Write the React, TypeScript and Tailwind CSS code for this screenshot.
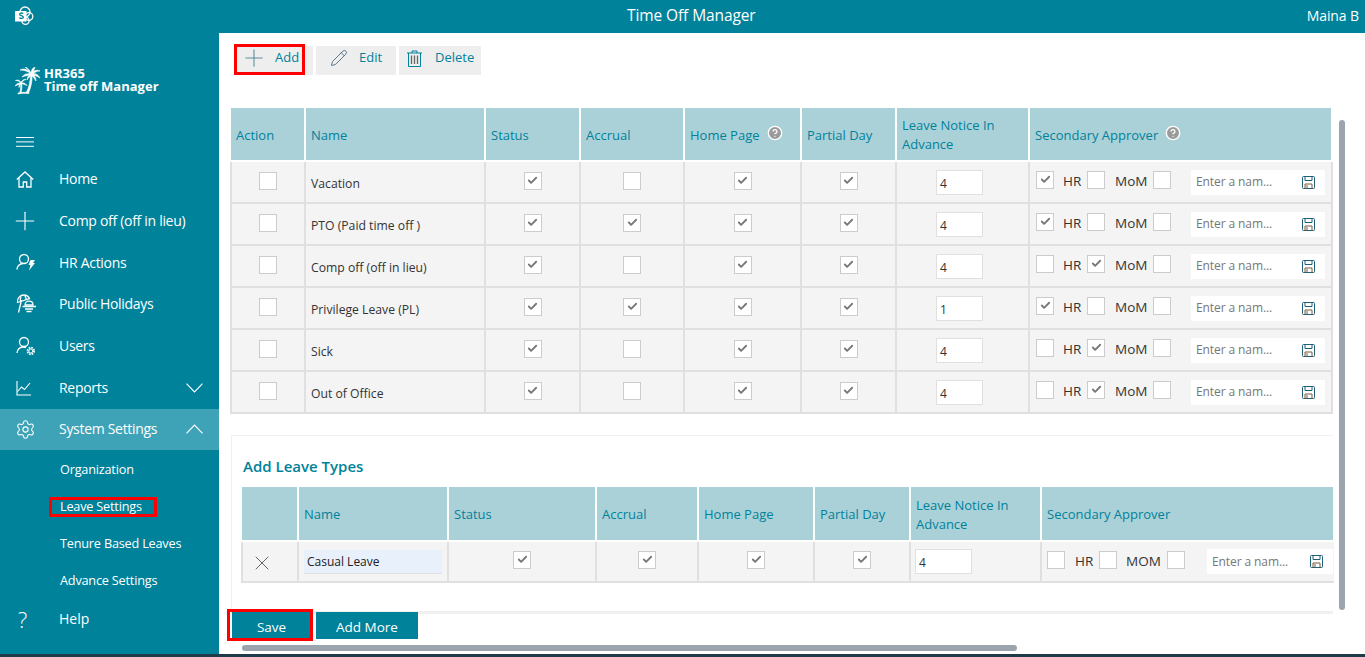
import { Check, CircleHelp, Pencil, Plus, Settings, X } from 'lucide-react'
import type { ReactNode } from 'react'

function SharePointLogo() {
  return (
    <svg width="20" height="20" viewBox="0 0 20 20" fill="none" stroke="white" strokeWidth="1.300">
      <circle cx="11" cy="6" r="5" />
      <circle cx="15" cy="10.500" r="3.800" />
      <circle cx="11.500" cy="14.800" r="3.600" />
      <rect x="1" y="5" width="11.500" height="10.500" rx=".5" fill="white" stroke="none" />
      <path d="M9.300 7.500c-1.500-.8-3.800-.5-3.600 1 .2 1.300 3.700 1 3.600 2.800-.1 1.300-2.600 1.300-4 .6" stroke="#00829b" strokeWidth="1.400" />
    </svg>
  )
}

function PalmLogo() {
  return (
    <svg width="26" height="28" viewBox="0 0 26 28" fill="white" stroke="white" strokeWidth="0.600" strokeLinejoin="round">
      <path d="M16 7C13 2 9 1 5 3c4 0 8 1 11 4z" />
      <path d="M16 7c-1-4-3-6-6-7 3 2 4 4 5 7z" />
      <path d="M16 7c0-3 1-6 4-7-1 3-2 5-3 7z" />
      <path d="M16 7c2-3 5-5 9-3-4 0-6 2-8 4z" />
      <path d="M16 7c4-1 7 0 9 4-3-2-6-3-9-3z" />
      <path d="M16 7c3 1 5 3 5 7-2-3-3-5-6-6z" />
      <path d="M16 7c-3-1-7 0-9 3 3-1 6-2 9-2z" />
      <path d="M16 7c-2 1-4 3-4 6 1-2 3-4 5-5z" />
      <path d="M15.500 7.500h1.500c.5 6-1 13-3.500 18.500H11c3-5 4.500-12 4.500-18.500z" />
      <path d="M6 15.500c-1.500-2.500-3.500-3-5.500-2 2 0 4 .8 5.500 2.500z" />
      <path d="M6 15.500c1-2.500 3-3.500 5-3-2 .5-3.500 1.500-4.500 3.500z" />
      <path d="M6 16c2-.5 4 0 6 2.500-2-1-4-1.500-6-2z" />
      <path d="M6 16c-2-.5-4.500.5-6 3 2-1 4-1.800 6-2.500z" />
      <path d="M5.800 16c-1.500.8-2 2.500-1.800 4.500.6-1.800 1.200-3 2.200-4z" />
      <path d="M5.700 16.500h1c.4 3 .1 6-.7 9.500H4.800c.8-3.500 1.100-6.500.9-9.500z" />
      <path d="M3 26c3-.8 7-.8 11-.5v1c-4-.3-8-.2-11 .5z" />
    </svg>
  )
}

function HomeIcon() {
  return (
    <svg width="18" height="17" viewBox="0 0 18 17" fill="none" stroke="white" strokeWidth="1.300">
      <path d="M.8 8.500 9 1l8.200 7.500" />
      <path d="M3 7v9h4.300v-5h3.400v5H15V7" />
    </svg>
  )
}

function HamburgerIcon() {
  return (
    <svg width="18" height="10" viewBox="0 0 18 10" stroke="white" strokeWidth="1">
      <path d="M0 .5h18M0 4.900h18M0 9.300h18" />
    </svg>
  )
}

function Chevron({ up }: { up?: boolean }) {
  return (
    <svg width="17" height="10" viewBox="0 0 17 10" fill="none" stroke="white" strokeWidth="1.100" className="shrink-0">
      <path d={up ? 'M.5 9.300 8.500 1l8 8.300' : 'M.5.700 8.500 9l8-8.300'} />
    </svg>
  )
}

function UserBolt() {
  return (
    <svg width="20" height="20" viewBox="0 0 20 20" fill="none" stroke="white" strokeWidth="1.300">
      <circle cx="8" cy="6" r="4.500" />
      <path d="M1 16.500c0-3.500 2.800-6 6-6" />
      <path d="M14.500 7H19l-2 3h2l-6 7.500 1.500-5.500h-2z" fill="white" stroke="none" />
    </svg>
  )
}

function UserGear() {
  return (
    <svg width="20" height="20" viewBox="0 0 20 20" fill="none" stroke="white" strokeWidth="1.300">
      <circle cx="8" cy="6" r="4.500" />
      <path d="M1 17c0-3.500 2.800-6 6-6 1 0 2 .2 3 .8" />
      <circle cx="14.800" cy="15" r="3.300" strokeWidth="1.800" strokeDasharray="1.600 1" />
      <circle cx="14.800" cy="15" r="2" strokeWidth="1" />
    </svg>
  )
}

function BeachIcon() {
  return (
    <svg width="20" height="20" viewBox="0 0 20 20" fill="none" stroke="white" strokeWidth="1.300">
      <path d="M1.500 8.500C1 4 4 1 8 1c2.500 0 4.500 1.500 5.500 3.500z" />
      <path d="M5.500 6 2.500 18.500M5 2.500c-.8 2-1 3.500-.5 5M9 1.500c.3 1.500.8 2.500 1.500 3.500" />
      <path d="M9 11c0-2.500 2-3.800 4-3.800s4 1.300 4 3.800z" />
      <path d="M6.500 12.500h13.500M9 15h8M10.500 17.500h5" strokeWidth="1.400" />
    </svg>
  )
}

function ChartIcon() {
  return (
    <svg width="16" height="16" viewBox="0 0 16 16" fill="none" stroke="white" strokeWidth="1.100">
      <path d="M1 1v14h14" />
      <path d="M1.500 11.500l4-4.500 3 2.500 5.500-6.500" />
    </svg>
  )
}

function TrashIcon() {
  return (
    <svg width="15" height="17" viewBox="0 0 15 17" fill="none" stroke="#00829b" strokeWidth="1" className="mr-[13px] shrink-0">
      <path d="M0 3h15M5 3V1h5v2" />
      <path d="M1.500 3v13.500h12V3" />
      <path d="M4.500 5.500v8.500M7.500 5.500v8.500M10.500 5.500v8.500" stroke="#666666" strokeWidth="1.300" />
    </svg>
  )
}

function SaveIcon() {
  return (
    <svg width="13" height="13" viewBox="0 0 13 13" fill="none" strokeWidth="1" className="shrink-0">
      <rect x=".5" y=".5" width="12" height="12" rx="1" stroke="#1f5f78" />
      <path d="M3 .8v3.700h7V.8" stroke="#1f5f78" />
      <path d="M3 12.500V8h7v4.500M5 9v3.500" stroke="#7a5a3a" />
    </svg>
  )
}

function NavItem({ icon, label, active, chevron }: { icon: ReactNode; label: string; active?: boolean; chevron?: ReactNode }) {
  return (
    <div className={`flex items-center h-[41.700px] pl-[16px] pr-[16px] text-[14px] ${active ? 'bg-[#3fa3b8]' : ''}`}>
      <span className="w-[43px] flex items-center shrink-0">{icon}</span>
      <span className="flex-1 whitespace-nowrap tracking-[-0.300px] pb-[1px]">{label}</span>
      {chevron}
    </div>
  )
}

function SubItem({ label, marked }: { label: string; marked?: boolean }) {
  return (
    <div className="flex items-center h-[37px] pl-[60px] text-[12.700px] tracking-[-0.200px]">
      {marked ? (
        <span className="-ml-[11px] pl-[8px] pr-[12px] h-[20px] leading-[13px] border-[3px] border-[#ff0000]">{label}</span>
      ) : (
        label
      )}
    </div>
  )
}

function Sidebar() {
  return (
    <aside className="w-[219px] shrink-0 bg-[#00829b] text-white flex flex-col">
      <div className="flex items-start pl-[15px] pt-[34px] h-[76px]">
        <PalmLogo />
        <div className="ml-[3px] text-[13px] font-bold leading-[13px] tracking-[0.020px]">
          <div>HR365</div>
          <div>Time off Manager</div>
        </div>
      </div>
      <div className="pl-[16px] mt-[23px] h-[19px] flex items-center">
        <HamburgerIcon />
      </div>
      <div className="mt-[7.500px]">
        <NavItem icon={<HomeIcon />} label="Home" />
        <NavItem icon={<Plus size={30} strokeWidth={0.900} className="-ml-[6px] -my-[6px] shrink-0" />} label="Comp off (off in lieu)" />
        <NavItem icon={<UserBolt />} label="HR Actions" />
        <NavItem icon={<BeachIcon />} label="Public Holidays" />
        <NavItem icon={<UserGear />} label="Users" />
        <NavItem icon={<ChartIcon />} label="Reports" chevron={<Chevron />} />
        <NavItem icon={<Settings size={21} strokeWidth={1.200} className="-ml-[1px]" />} label="System Settings" active chevron={<Chevron up />} />
      </div>
      <div className="pt-[1px]">
        <SubItem label="Organization" />
        <SubItem label="Leave Settings" marked />
        <SubItem label="Tenure Based Leaves" />
        <SubItem label="Advance Settings" />
      </div>
      <div className="flex items-center h-[40px] pl-[18px] pb-[1px] text-[14px]">
        <span className="w-[41px] text-[22px] font-light leading-none">?</span>
        <span>Help</span>
      </div>
    </aside>
  )
}

function Box({ checked }: { checked?: boolean }) {
  return (
    <span className="w-[18px] h-[18px] shrink-0 bg-white border border-[#cccccc] flex items-center justify-center">
      {checked && <Check size={11} strokeWidth={4} className="text-[#777777] -mt-[1px]" />}
    </span>
  )
}

function ToolButton({ icon, label, className }: { icon: ReactNode; label: string; className: string }) {
  return (
    <div className={`flex items-center h-[29px] bg-[#eeeeee] text-[#00829b] text-[13px] pb-[5px] ${className}`}>
      {icon}
      <span>{label}</span>
    </div>
  )
}

const rows = [
  { name: 'Vacation', accrual: false, notice: '4', hr: true, mom: false },
  { name: 'PTO (Paid time off )', accrual: true, notice: '4', hr: true, mom: false },
  { name: 'Comp off (off in lieu)', accrual: false, notice: '4', hr: false, mom: true },
  { name: 'Privilege Leave (PL)', accrual: true, notice: '1', hr: true, mom: false },
  { name: 'Sick', accrual: false, notice: '4', hr: false, mom: true },
  { name: 'Out of Office', accrual: false, notice: '4', hr: false, mom: true },
]

const thClass = 'bg-[#abd1d8] text-[#00829b] font-normal text-left text-[13px] leading-[19px] px-[5px] pt-[2px] border-r-[2px] border-b-[2px] border-white'
const tdClass = 'border-[2px] border-[#e0e0e0] bg-[#f4f4f4] p-0'

function Hint() {
  return <CircleHelp size={16} fill="#9a9a9a" stroke="white" strokeWidth={2} className="inline-block ml-[7px] -mt-[6px]" />
}

function CenterBox({ checked }: { checked?: boolean }) {
  return (
    <div className="flex justify-center -mt-[3px]">
      <Box checked={checked} />
    </div>
  )
}

function NameInput({ width }: { width: string }) {
  return (
    <div className={`${width} h-[25px] bg-white flex items-center justify-between pl-[5px] pr-[10px] text-[12px] text-[#777777] tracking-[-0.100px]`}>
      <span>Enter a nam...</span>
      <SaveIcon />
    </div>
  )
}

function LeaveTable() {
  return (
    <table className="table-fixed border-collapse w-[1101px] ml-[11px]">
      <colgroup>
        <col className="w-[74px]" />
        <col className="w-[180px]" />
        <col className="w-[95px]" />
        <col className="w-[104px]" />
        <col className="w-[117px]" />
        <col className="w-[95px]" />
        <col className="w-[133px]" />
        <col className="w-[303px]" />
      </colgroup>
      <thead>
        <tr className="h-[53px]">
          <th className={thClass}>Action</th>
          <th className={thClass}>Name</th>
          <th className={thClass}>Status</th>
          <th className={thClass}>Accrual</th>
          <th className={thClass}>Home Page<Hint /></th>
          <th className={thClass}>Partial Day</th>
          <th className={thClass}>Leave Notice In Advance</th>
          <th className={thClass}>Secondary Approver<Hint /></th>
        </tr>
      </thead>
      <tbody>
        {rows.map((row) => (
          <tr key={row.name} className="h-[42px]">
            <td className={tdClass}><CenterBox /></td>
            <td className={`${tdClass} px-[5px] pt-[5px] text-[12.200px] text-[#333333]`}>{row.name}</td>
            <td className={tdClass}><CenterBox checked /></td>
            <td className={tdClass}><CenterBox checked={row.accrual} /></td>
            <td className={tdClass}><CenterBox checked /></td>
            <td className={tdClass}><CenterBox checked /></td>
            <td className={tdClass}>
              <div className="w-[47px] h-[25px] ml-[39px] bg-white border border-[#e0e0e0] pl-[3px] pt-[5px] text-[12px] leading-[16px] text-[#333333]">{row.notice}</div>
            </td>
            <td className={tdClass}>
              <div className="flex items-center pl-[6px] pr-[6px]">
                <div className="flex items-center -mt-[5px]"><Box checked={row.hr} /></div>
                <span className="ml-[9px] -mt-[2px] text-[13.500px] text-[#333333] w-[24px]">HR</span>
                <div className="-mt-[5px]"><Box checked={row.mom} /></div>
                <span className="ml-[10px] -mt-[2px] text-[13.500px] text-[#333333] w-[38px]">MoM</span>
                <div className="-mt-[5px]"><Box /></div>
                <div className="flex-1" />
                <NameInput width="w-[134px]" />
              </div>
            </td>
          </tr>
        ))}
      </tbody>
    </table>
  )
}

function AddTable() {
  return (
    <table className="table-fixed border-collapse w-[1092px]">
      <colgroup>
        <col className="w-[56px]" />
        <col className="w-[150px]" />
        <col className="w-[148px]" />
        <col className="w-[102px]" />
        <col className="w-[116px]" />
        <col className="w-[96px]" />
        <col className="w-[131px]" />
        <col className="w-[293px]" />
      </colgroup>
      <thead>
        <tr className="h-[54px]">
          <th className={thClass}></th>
          <th className={thClass}>Name</th>
          <th className={thClass}>Status</th>
          <th className={thClass}>Accrual</th>
          <th className={thClass}>Home Page</th>
          <th className={thClass}>Partial Day</th>
          <th className={thClass}>Leave Notice In Advance</th>
          <th className={`${thClass} border-r-0`}>Secondary Approver</th>
        </tr>
      </thead>
      <tbody>
        <tr className="h-[41px]">
          <td className={tdClass}>
            <div className="flex pl-[7px] pt-[2px]"><X size={24} strokeWidth={0.900} className="text-[#555555]" /></div>
          </td>
          <td className={`${tdClass} px-[5px]`}>
            <div className="h-[24px] bg-[#e8f0fb] border-b border-[#e0e0e0] pl-[3px] text-[12px] leading-[24px] text-[#222222]">Casual Leave</div>
          </td>
          <td className={tdClass}><CenterBox checked /></td>
          <td className={tdClass}><CenterBox checked /></td>
          <td className={tdClass}><CenterBox checked /></td>
          <td className={tdClass}><CenterBox checked /></td>
          <td className={tdClass}>
            <div className="w-[57px] h-[25px] ml-[4px] bg-white border border-[#e0e0e0] pl-[3px] pt-[5px] text-[12px] leading-[16px] text-[#333333]">4</div>
          </td>
          <td className={`${tdClass} border-r-0`}>
            <div className="flex items-center pl-[5px]">
              <div className="-mt-[4px]"><Box /></div>
              <span className="ml-[10px] -mt-[1px] text-[13.500px] text-[#333333] w-[24px]">HR</span>
              <div className="-mt-[4px]"><Box /></div>
              <span className="ml-[9px] -mt-[1px] text-[13.500px] text-[#333333] w-[41px]">MOM</span>
              <div className="-mt-[4px]"><Box /></div>
              <div className="w-[22px]" />
              <NameInput width="w-[126px]" />
            </div>
          </td>
        </tr>
      </tbody>
    </table>
  )
}

export default function App() {
  return (
    <div className="w-[1365px] h-[657px] overflow-hidden flex flex-col bg-white font-['Open_Sans',sans-serif]">
      <header className="relative h-[33px] shrink-0 bg-[#00829b] text-white flex items-center justify-between pr-[6px] pb-[2px]">
        <div className="pl-[14px]"><SharePointLogo /></div>
        <div className="absolute left-[627px] text-[15.500px] tracking-[-0.100px]">Time Off Manager</div>
        <div className="text-[14px] tracking-[-0.100px]">Maina B</div>
      </header>
      <div className="flex flex-1 min-h-0">
        <Sidebar />
        <main className="relative flex-1 min-w-0">
          <div className="flex gap-[3px] pt-[13px] pl-[17px]">
            <div className="relative">
              <ToolButton className="w-[77px] pl-[4px]" icon={<Plus size={28} strokeWidth={0.900} className="text-[#5a8ca0] mr-[7px] shrink-0" />} label="Add" />
              <div className="absolute -top-[2px] -left-[2px] w-[71px] h-[31px] border-[3px] border-[#ff0000]" />
            </div>
            <ToolButton className="w-[80px] pl-[14px]" icon={<Pencil size={18} strokeWidth={1.200} className="text-[#4a6a80] mr-[11px]" />} label="Edit" />
            <ToolButton className="w-[82px] pl-[8px]" icon={<TrashIcon />} label="Delete" />
          </div>
          <div className="mt-[33px] mr-[20px]">
            <LeaveTable />
          </div>
          <section className="mt-[21px] ml-[12px] w-[1102px] h-[179px] border-l border-t border-b-[3px] border-[#f0f0f0] pl-[9px] pt-[20px]">
            <h2 className="text-[15px] font-semibold text-[#00829b] leading-[20px] mb-[11px] pl-[2px]">Add Leave Types</h2>
            <AddTable />
          </section>
          <div className="flex gap-[5px] pl-[13px] -mt-[2px]">
            <div className="relative">
              <div className="w-[79px] h-[27px] bg-[#00829b] text-white text-[13.500px] pt-[3px] flex items-center justify-center">Save</div>
              <div className="absolute -top-[3px] -left-[5px] w-[86px] h-[32px] border-[3px] border-[#ff0000]" />
            </div>
            <div className="w-[102px] h-[27px] bg-[#00829b] text-white text-[13.500px] pt-[3px] flex items-center justify-center">Add More</div>
          </div>
          <div className="absolute left-[1120px] top-[87px] w-[6px] h-[490px] rounded-full bg-[#9ca5ad]" />
          <div className="absolute left-[23px] top-[612px] w-[775px] h-[6px] rounded-full bg-[#9ca5ad]" />
        </main>
      </div>
      <div className="h-[3px] shrink-0 bg-[#1f3a48]" />
    </div>
  )
}
